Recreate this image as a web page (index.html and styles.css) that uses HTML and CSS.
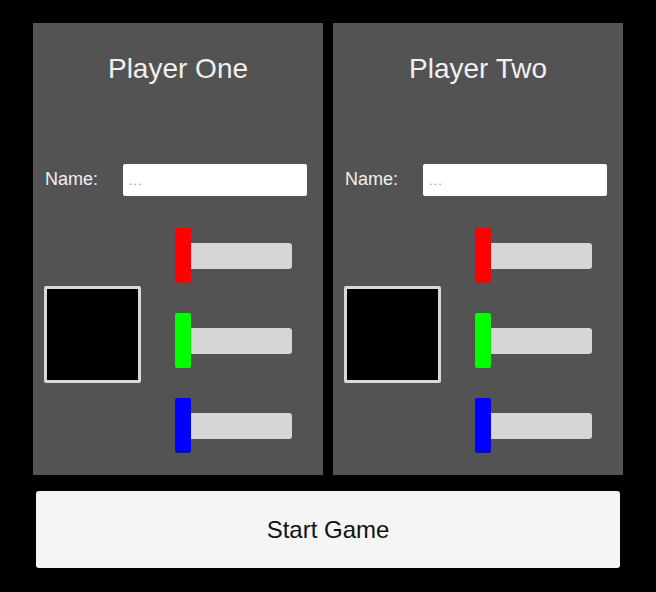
FILE: index.html
```html
<!DOCTYPE html>
<html>
<head>
<meta charset="utf-8">
<link rel="stylesheet" href="styles.css">
</head>
<body>
<div class="screen">
  <div class="panels">
    <div class="panel">
      <div class="title">Player One</div>
      <div class="name-row">
        <span class="label">Name:</span>
        <input class="name-input" type="text" placeholder="...">
      </div>
      <div class="body">
        <div class="preview"></div>
        <div class="sliders">
          <div class="slider"><div class="handle red"></div><div class="track"></div></div>
          <div class="slider"><div class="handle green"></div><div class="track"></div></div>
          <div class="slider"><div class="handle blue"></div><div class="track"></div></div>
        </div>
      </div>
    </div>
    <div class="panel">
      <div class="title">Player Two</div>
      <div class="name-row">
        <span class="label">Name:</span>
        <input class="name-input" type="text" placeholder="...">
      </div>
      <div class="body">
        <div class="preview"></div>
        <div class="sliders">
          <div class="slider"><div class="handle red"></div><div class="track"></div></div>
          <div class="slider"><div class="handle green"></div><div class="track"></div></div>
          <div class="slider"><div class="handle blue"></div><div class="track"></div></div>
        </div>
      </div>
    </div>
  </div>
  <button class="start">Start Game</button>
</div>
</body>
</html>
```
FILE: styles.css
```css
html, body {
  margin: 0;
  padding: 0;
  background: #000;
  font-family: "Liberation Sans", Arial, sans-serif;
}
.screen {
  width: 656px;
  height: 592px;
  padding: 23px 0 0 33px;
  box-sizing: border-box;
  display: flex;
  flex-direction: column;
}
.panels {
  display: flex;
  gap: 10px;
}
.panel {
  width: 290px;
  height: 452px;
  background: #535353;
  display: flex;
  flex-direction: column;
}
.title {
  margin-top: 30px;
  height: 32px;
  line-height: 32px;
  font-size: 28px;
  color: #f0f0f0;
  text-align: center;
}
.name-row {
  margin-top: 79px;
  height: 32px;
  display: flex;
  align-items: center;
  padding-left: 12px;
}
.label {
  width: 78px;
  font-size: 18px;
  color: #f0f0f0;
  line-height: 32px;
  margin-top: -3px;
}
.name-input {
  width: 184px;
  height: 32px;
  box-sizing: border-box;
  border: none;
  border-radius: 2px;
  background: #fff;
  padding: 0 0 0 6px;
  font-family: "Liberation Sans", Arial, sans-serif;
  font-size: 13px;
  letter-spacing: 1px;
  outline: none;
}
.name-input::placeholder {
  color: #9a9a9a;
}
.body {
  margin-top: 32px;
  display: flex;
}
.preview {
  margin-left: 11px;
  margin-top: 58px;
  width: 97px;
  height: 97px;
  box-sizing: border-box;
  border: 3px solid #d9d9d9;
  border-radius: 2px;
  background: #000;
}
.sliders {
  margin-left: 34px;
  display: flex;
  flex-direction: column;
  gap: 30px;
}
.slider {
  display: flex;
  height: 55px;
}
.handle {
  width: 16px;
  height: 55px;
  border-radius: 2px;
}
.red { background: #ff0000; }
.green { background: #00ff00; }
.blue { background: #0000ff; }
.track {
  width: 101px;
  height: 26px;
  margin-top: 15px;
  background: #d6d6d6;
  border-radius: 0 3px 3px 0;
}
.start {
  margin: 16px 0 0 3px;
  width: 584px;
  height: 77px;
  border: none;
  border-radius: 3px;
  background: #f5f5f5;
  color: #111;
  font-family: "Liberation Sans", Arial, sans-serif;
  font-size: 24px;
  padding: 0;
}
```
